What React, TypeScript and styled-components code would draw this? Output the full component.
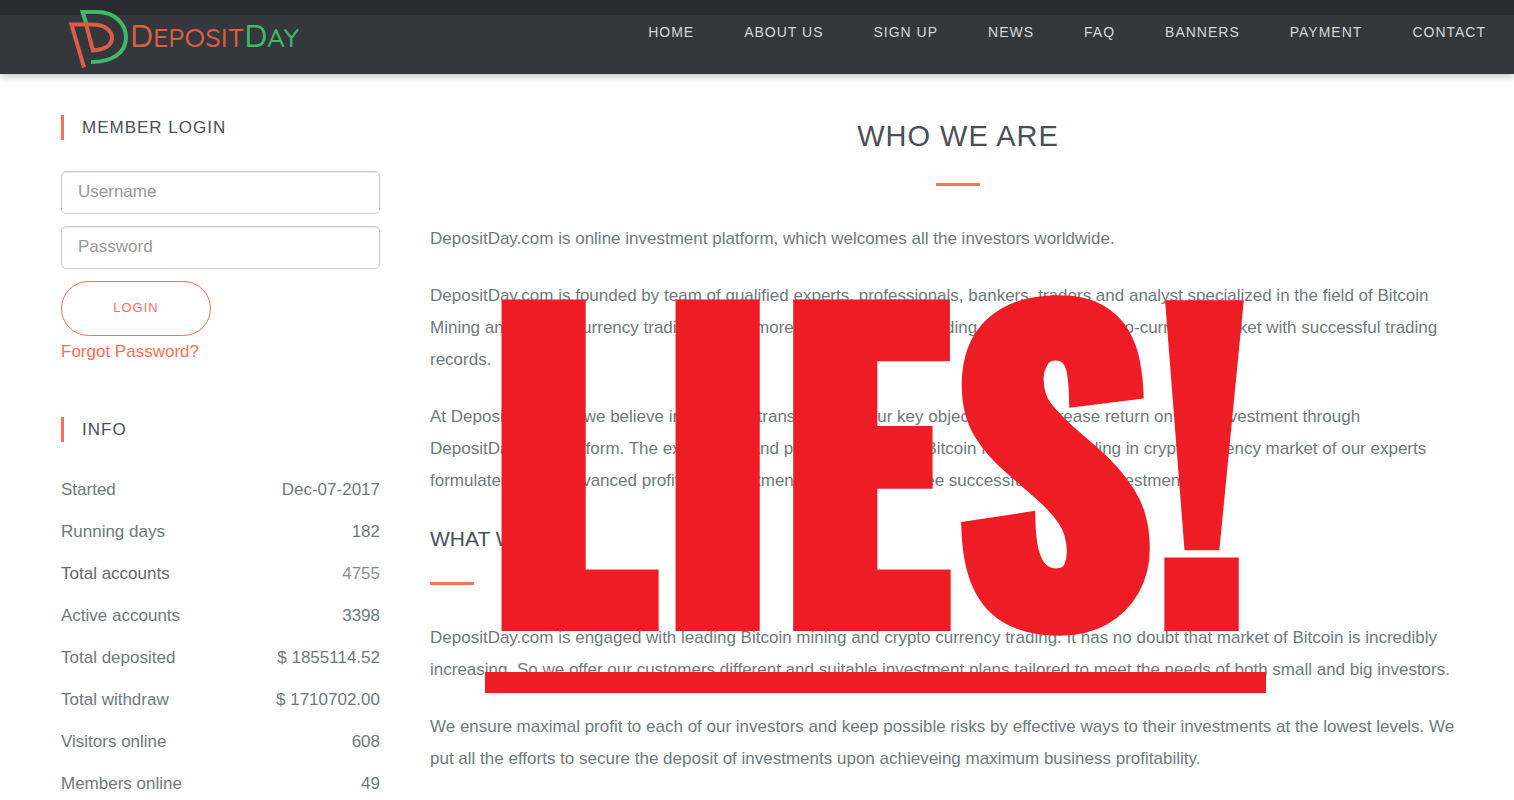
import React from "react";
import styled, { createGlobalStyle } from "styled-components";

const accent = "#ff6f56";
const ink = "#4b4f58";
const body = "#6f797d";
const stampRed = "#ee1c24";

const GlobalStyle = createGlobalStyle`
  *, *::before, *::after { box-sizing: border-box; }
  html, body { margin: 0; padding: 0; }
  body {
    background: #fff;
    color: ${body};
    font-family: "Liberation Sans", Arial, sans-serif;
    font-size: 17px;
    line-height: 32px;
    overflow-x: hidden;
  }
`;

const Header = styled.header`
  display: flex;
  justify-content: space-between;
  align-items: flex-start;
  height: 74px;
  padding: 0 28px 0 66px;
  background: #34373c;
  border-top: 15px solid #282b31;
  box-shadow: 0 2px 8px rgba(0, 0, 0, 0.25);
`;

const Brand = styled.a`
  display: flex;
  align-items: flex-start;
  margin-top: -9px;
  text-decoration: none;
`;

const Mark = styled.svg`
  width: 64px;
  height: 64px;
  flex: none;
`;

const Wordmark = styled.span`
  margin-top: 13px;
  font-family: Quicksand, Comfortaa, Lato, sans-serif;
  font-size: 27px;
  font-weight: 500;
  line-height: 32px;
  color: #dc5d47;
`;

const Big = styled.span`
  font-size: 32px;
`;

const Green = styled.span`
  color: #3fb968;
`;

const Nav = styled.nav`
  display: flex;
  gap: 50px;
  padding-top: 1px;
`;

const NavLink = styled.a`
  color: #d5d7d9;
  font-size: 14px;
  letter-spacing: 1px;
  text-decoration: none;
  text-transform: uppercase;
`;

const Main = styled.main`
  position: relative;
  display: grid;
  grid-template-columns: 319px minmax(0, 1fr);
  gap: 50px;
  padding: 41px 28px 0 61px;
`;

const Sidebar = styled.aside`
  display: flex;
  flex-direction: column;
`;

const SideTitle = styled.h2`
  margin: 0;
  padding-left: 18px;
  border-left: 3px solid ${accent};
  color: ${ink};
  font-size: 17px;
  font-weight: 400;
  letter-spacing: 1px;
  line-height: 25px;
  text-transform: uppercase;
`;

const LoginForm = styled.form`
  display: flex;
  flex-direction: column;
  align-items: flex-start;
  gap: 12px;
  margin-top: 31px;
`;

const Field = styled.input`
  width: 100%;
  height: 43px;
  padding: 0 16px 2px;
  border: 1px solid #ccc;
  border-radius: 5px;
  background: #fff;
  box-shadow: inset 0 1px 1px rgba(0, 0, 0, 0.08);
  color: ${body};
  font: inherit;
  &::placeholder { color: #999; opacity: 1; }
`;

const LoginButton = styled.button`
  width: 150px;
  height: 55px;
  padding: 0 0 3px;
  border: 1px solid ${accent};
  border-radius: 28px;
  background: #fff;
  color: ${accent};
  font-family: inherit;
  font-size: 13px;
  letter-spacing: 1px;
`;

const ForgotLink = styled.a`
  align-self: flex-start;
  margin-bottom: 49px;
  color: ${accent};
  text-decoration: none;
`;

const InfoTable = styled.table`
  width: 100%;
  margin-top: 27px;
  border-collapse: collapse;
`;

const Label = styled.th<{ $hot?: boolean }>`
  padding: 5px 0;
  color: ${(p) => (p.$hot ? "#66666f" : body)};
  font-weight: 400;
  text-align: left;
`;

const Value = styled.td<{ $hot?: boolean }>`
  padding: 5px 0;
  color: ${(p) => (p.$hot ? "#8a8d97" : body)};
  text-align: right;
`;

const Article = styled.article`
  display: flex;
  flex-direction: column;
`;

const Title = styled.h1`
  margin: 5px 0 0;
  color: ${ink};
  font-size: 29px;
  font-weight: 400;
  letter-spacing: 1px;
  text-align: center;
`;

const Subtitle = styled.h2`
  margin: 1px 0 0;
  color: ${ink};
  font-size: 21px;
  font-weight: 400;
`;

const Rule = styled.hr<{ $center?: boolean }>`
  width: 44px;
  height: 3px;
  margin: ${(p) => (p.$center ? "31px auto 37px" : "27px 0 37px")};
  border: 0;
  background: ${accent};
`;

const Text = styled.p`
  margin: 0 0 25px;
  padding-right: 12px;
`;

const Stamp = styled.strong`
  position: absolute;
  left: 485px;
  top: 179px;
  width: 781px;
  height: 440px;
  border-bottom: 21px solid ${stampRed};
  color: ${stampRed};
  font-family: Oswald, Anton, "Roboto Condensed", sans-serif;
  font-size: 392px;
  font-weight: 700;
  line-height: 387px;
  white-space: nowrap;
  pointer-events: none;
  -webkit-text-stroke: 14px ${stampRed};
`;

const links = ["Home", "About us", "Sign up", "News", "FAQ", "Banners", "Payment", "Contact"];

const info: [string, string][] = [
  ["Started", "Dec-07-2017"],
  ["Running days", "182"],
  ["Total accounts", "4755"],
  ["Active accounts", "3398"],
  ["Total deposited", "$ 1855114.52"],
  ["Total withdraw", "$ 1710702.00"],
  ["Visitors online", "608"],
  ["Members online", "49"],
];

export default function App() {
  return (
    <>
      <GlobalStyle />
      <Header>
        <Brand href="#" aria-label="DepositDay">
          <Mark viewBox="66 6 64 64" fill="none" strokeWidth="4" aria-hidden="true">
            <path stroke="#3fb968" d="M86.500 24L82.500 12H97C115 12 126 24 126 37.500C126 53 112 62 91 62" />
            <path stroke="#dc5d47" d="M84 67.500L71.500 24.500H93C105 24.500 112 31 112 38C112 45 105 49.500 93 50.500L86.500 26" />
          </Mark>
          <Wordmark>
            <Big>D</Big>EPOSIT<Green><Big>D</Big>AY</Green>
          </Wordmark>
        </Brand>
        <Nav>
          {links.map((l) => (
            <NavLink key={l} href="#">{l}</NavLink>
          ))}
        </Nav>
      </Header>
      <Main>
        <Sidebar>
          <SideTitle>Member login</SideTitle>
          <LoginForm onSubmit={(e) => e.preventDefault()}>
            <Field type="text" placeholder="Username" aria-label="Username" />
            <Field type="password" placeholder="Password" aria-label="Password" />
            <LoginButton type="submit">LOGIN</LoginButton>
          </LoginForm>
          <ForgotLink href="#">Forgot Password?</ForgotLink>
          <SideTitle>Info</SideTitle>
          <InfoTable>
            <tbody>
              {info.map(([name, value]) => (
                <tr key={name}>
                  <Label scope="row" $hot={name === "Total accounts"}>{name}</Label>
                  <Value $hot={name === "Total accounts"}>{value}</Value>
                </tr>
              ))}
            </tbody>
          </InfoTable>
        </Sidebar>
        <Article>
          <Title>WHO WE ARE</Title>
          <Rule $center />
          <Text>DepositDay.com is online investment platform, which welcomes all the investors worldwide.</Text>
          <Text>
            DepositDay.com is founded by team of qualified experts, professionals, bankers, traders and analyst
            specialized in the field of Bitcoin Mining and Crypto-currency trading having more than 10 years of trading
            experience in crypto-currency market with successful trading records.
          </Text>
          <Text>
            At DepositDay.com, we believe in trust and transparency. Our key objective is to increase return on your
            investment through DepositDay.com platform. The experience and professionalism of Bitcoin Mining and
            trading in crypto-currency market of our experts formulates highly advanced profitable investment plans to
            guarantee successful and safe investments.
          </Text>
          <Subtitle>WHAT WE DO</Subtitle>
          <Rule />
          <Text>
            DepositDay.com is engaged with leading Bitcoin mining and crypto currency trading. It has no doubt that
            market of Bitcoin is incredibly increasing. So we offer our customers different and suitable investment
            plans tailored to meet the needs of both small and big investors.
          </Text>
          <Text>
            We ensure maximal profit to each of our investors and keep possible risks by effective ways to their
            investments at the lowest levels. We put all the efforts to secure the deposit of investments upon
            achieveing maximum business profitability.
          </Text>
        </Article>
        <Stamp>LIES!</Stamp>
      </Main>
    </>
  );
}
